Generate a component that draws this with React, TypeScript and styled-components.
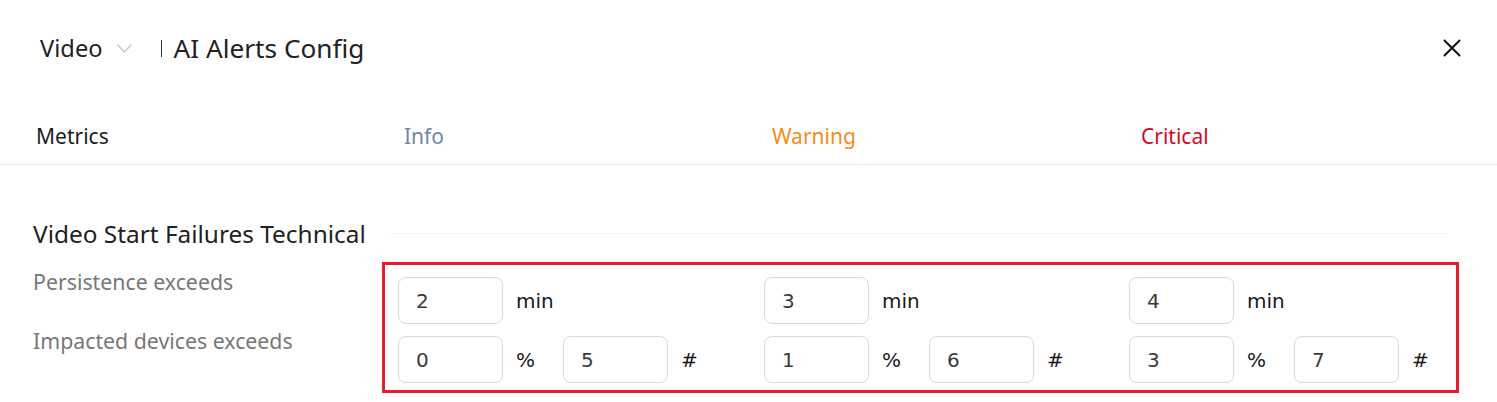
import React from "react";
import styled, { createGlobalStyle } from "styled-components";

const Global = createGlobalStyle`
  html, body { margin: 0; padding: 0; background: #ffffff; }
  body { font-family: "Noto Sans", "Open Sans", sans-serif; color: #222; }
  * { box-sizing: border-box; }
`;

const Page = styled.div`
  width: 1497px;
  background: #fff;
  overflow: hidden;
`;

const Header = styled.header`
  height: 96px;
  display: flex;
  align-items: center;
  padding: 0 36px 0 40px;
`;

const Select = styled.div`
  display: flex;
  align-items: center;
  font-size: 23.7px;
  color: #222;
  gap: 14px;
`;

const Divider = styled.span`
  width: 1px;
  height: 17px;
  background: #333;
  margin-left: 29px;
`;

const Title = styled.h1`
  margin: 0 0 0 12px;
  font-size: 26.2px;
  font-weight: 400;
  color: #222;
`;

const Spacer = styled.div`
  flex: 1;
`;

const CloseButton = styled.button`
  border: 0;
  background: none;
  padding: 0;
  width: 18px;
  height: 18px;
  display: flex;
  cursor: pointer;
`;

const Tabs = styled.div`
  display: grid;
  grid-template-columns: 368px 368px 369px 1fr;
  padding: 26px 0 14px 36px;
  border-bottom: 1px solid #ececec;
`;

const Tab = styled.div<{ $color: string }>`
  font-size: 21px;
  line-height: 28px;
  color: ${(p) => p.$color};
`;

const Section = styled.section`
  padding: 53px 0 0 33px;
`;

const SectionHead = styled.div`
  display: flex;
  align-items: center;
  height: 30px;
  width: 1414px;
`;

const SectionTitle = styled.h2`
  margin: 0;
  font-size: 24.4px;
  font-weight: 400;
  color: #222;
  white-space: nowrap;
`;

const Rule = styled.div`
  flex: 1;
  height: 1px;
  background: #f0f0f0;
  margin-left: 24px;
`;

const Body = styled.div`
  display: flex;
  margin-top: 14px;
`;

const Labels = styled.div`
  flex: 0 0 349px;
  padding-top: 6px;
  display: flex;
  flex-direction: column;
  gap: 31px;
`;

const Label = styled.div`
  font-size: 21.3px;
  line-height: 28px;
  color: #777;
  white-space: nowrap;
`;

const Box = styled.div`
  flex: 0 0 1077px;
  border: 3px solid #e31e26;
  padding: 12px 0 7px 13px;
  display: grid;
  grid-template-columns: 366px 365px 1fr;
`;

const Column = styled.div`
  display: flex;
  flex-direction: column;
  gap: 12px;
`;

const Line = styled.div`
  display: flex;
  align-items: center;
  gap: 13px;
`;

const Input = styled.input`
  width: 105px;
  height: 47px;
  border: 1px solid #d9d9d9;
  border-radius: 8px;
  padding: 0 0 0 17px;
  font-family: "DejaVu Sans", Verdana, sans-serif;
  font-size: 20px;
  color: #3a3a3a;
  background: #fff;
  outline: none;
`;

const Unit = styled.span`
  width: 34px;
  font-family: "DejaVu Sans", Verdana, sans-serif;
  font-size: 20px;
  color: #1a1a1a;
`;

const levels = [
  { min: "2", pct: "0", num: "5" },
  { min: "3", pct: "1", num: "6" },
  { min: "4", pct: "3", num: "7" },
];

export default function App() {
  return (
    <Page>
      <Global />
      <Header>
        <Select>
          <span>Video</span>
          <svg width="15" height="9" viewBox="0 0 15 9" fill="none">
            <polyline points="0.5,0.5 7.5,8 14.5,0.5" stroke="#c4c4c4" strokeWidth="1.3" />
          </svg>
        </Select>
        <Divider />
        <Title>AI Alerts Config</Title>
        <Spacer />
        <CloseButton aria-label="close">
          <svg width="18" height="18" viewBox="0 0 18 18">
            <path d="M1 1 L17 17 M17 1 L1 17" stroke="#111" strokeWidth="2" />
          </svg>
        </CloseButton>
      </Header>
      <Tabs>
        <Tab $color="#1c1c1c">Metrics</Tab>
        <Tab $color="#6f88a6">Info</Tab>
        <Tab $color="#f78c1a">Warning</Tab>
        <Tab $color="#d20a1f">Critical</Tab>
      </Tabs>
      <Section>
        <SectionHead>
          <SectionTitle>Video Start Failures Technical</SectionTitle>
          <Rule />
        </SectionHead>
        <Body>
          <Labels>
            <Label>Persistence exceeds</Label>
            <Label>Impacted devices exceeds</Label>
          </Labels>
          <Box>
            {levels.map((l, i) => (
              <Column key={i}>
                <Line>
                  <Input defaultValue={l.min} />
                  <Unit>min</Unit>
                </Line>
                <Line>
                  <Input defaultValue={l.pct} />
                  <Unit>%</Unit>
                  <Input defaultValue={l.num} />
                  <Unit>#</Unit>
                </Line>
              </Column>
            ))}
          </Box>
        </Body>
      </Section>
    </Page>
  );
}
